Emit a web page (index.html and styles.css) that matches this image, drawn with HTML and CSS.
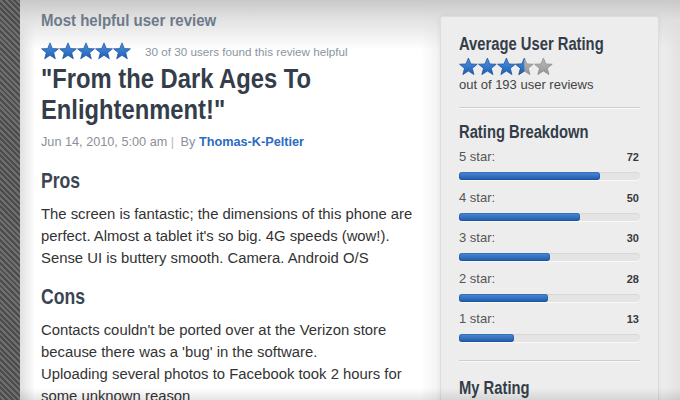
FILE: index.html
```html
<!DOCTYPE html>
<html lang="en">
<head>
    <meta charset="UTF-8">
    <title>Most helpful user review</title>
    <link rel="stylesheet" href="styles.css">
</head>
<body>
    <svg class="defs" width="0" height="0">
        <defs>
            <linearGradient id="blue" x1="0" y1="0" x2="0" y2="1">
                <stop offset="0" stop-color="#4f93e4"/>
                <stop offset="1" stop-color="#1d5fb3"/>
            </linearGradient>
            <linearGradient id="grey" x1="0" y1="0" x2="0" y2="1">
                <stop offset="0" stop-color="#bdbdbd"/>
                <stop offset="1" stop-color="#939393"/>
            </linearGradient>
            <clipPath id="half"><rect x="0" y="0" width="10" height="20"/></clipPath>
            <polygon id="star" points="10,1 12.6,7.3 19.4,7.6 14.1,11.9 15.9,18.6 10,14.8 4.1,18.6 5.9,11.9 0.6,7.6 7.4,7.3"/>
        </defs>
    </svg>

    <div class="stripe"></div>

    <div class="page">
        <div class="review">
            <h2 class="kicker">Most helpful user review</h2>

            <div class="helpful">
                <span class="stars">
                    <svg viewBox="0 0 20 20"><use href="#star" class="on"/></svg>
                    <svg viewBox="0 0 20 20"><use href="#star" class="on"/></svg>
                    <svg viewBox="0 0 20 20"><use href="#star" class="on"/></svg>
                    <svg viewBox="0 0 20 20"><use href="#star" class="on"/></svg>
                    <svg viewBox="0 0 20 20"><use href="#star" class="on"/></svg>
                </span>
                <span>30 of 30 users found this review helpful</span>
            </div>

            <h1 class="title">"From the Dark Ages To<br>Enlightenment!"</h1>

            <div class="meta">Jun 14, 2010, 5:00 am <span class="sep">|</span> By <a href="#">Thomas-K-Peltier</a></div>

            <h3>Pros</h3>
            <p>The screen is fantastic; the dimensions of this phone are perfect. Almost a tablet it's so big. 4G speeds (wow!). Sense UI is buttery smooth. Camera. Android O/S</p>

            <h3>Cons</h3>
            <p>Contacts couldn't be ported over at the Verizon store because there was a 'bug' in the software.<br>
            Uploading several photos to Facebook took 2 hours for some unknown reason</p>
        </div>

        <div class="sidebar">
            <div class="panel">
                <h4>Average User Rating</h4>
                <div class="stars big">
                    <svg viewBox="0 0 20 20"><use href="#star" class="on"/></svg>
                    <svg viewBox="0 0 20 20"><use href="#star" class="on"/></svg>
                    <svg viewBox="0 0 20 20"><use href="#star" class="on"/></svg>
                    <svg viewBox="0 0 20 20"><use href="#star" class="off"/><use href="#star" class="on" clip-path="url(#half)"/></svg>
                    <svg viewBox="0 0 20 20"><use href="#star" class="off"/></svg>
                </div>
                <div class="count">out of 193 user reviews</div>

                <hr>

                <h4>Rating Breakdown</h4>
                <div class="row">
                    <div class="row-head"><span>5 star:</span><b>72</b></div>
                    <div class="track"><div class="fill" style="width: 78%"></div></div>
                </div>
                <div class="row">
                    <div class="row-head"><span>4 star:</span><b>50</b></div>
                    <div class="track"><div class="fill" style="width: 67%"></div></div>
                </div>
                <div class="row">
                    <div class="row-head"><span>3 star:</span><b>30</b></div>
                    <div class="track"><div class="fill" style="width: 50%"></div></div>
                </div>
                <div class="row">
                    <div class="row-head"><span>2 star:</span><b>28</b></div>
                    <div class="track"><div class="fill" style="width: 49%"></div></div>
                </div>
                <div class="row">
                    <div class="row-head"><span>1 star:</span><b>13</b></div>
                    <div class="track"><div class="fill" style="width: 30.5%"></div></div>
                </div>

                <hr class="last">

                <h4>My Rating</h4>
            </div>
        </div>
    </div>
</body>
</html>
```

FILE: styles.css
```css
html, body {
    margin: 0;
    height: 400px;
    overflow: hidden;
}
body {
    display: flex;
    font-family: "Liberation Sans", Arial, sans-serif;
    color: #333;
}
.defs {
    position: absolute;
}
.stripe {
    width: 20px;
    flex: none;
    background: repeating-linear-gradient(45deg, #4c4c4c 0 2px, #6e6e6e 2px 4px);
}
.page {
    flex: 1;
    display: flex;
    position: relative;
    background:
        linear-gradient(#c9c9c9, rgba(222,222,222,0.85) 20px, rgba(255,255,255,0) 50px),
        linear-gradient(90deg, #fff 400px, #f3f3f3 418px, #f5f5f5 630px, #e2e2e2 660px);
}
/* soft fade along the bottom edge */
.page::after {
    content: "";
    position: absolute;
    left: 0;
    right: 0;
    bottom: 0;
    height: 12px;
    background: linear-gradient(rgba(0,0,0,0), rgba(0,0,0,0.1));
}
.review {
    width: 382px;
    flex: none;
    padding: 10px 0 0 21px;
    background:
        linear-gradient(#c9c9c9, rgba(222,222,222,0.85) 20px, rgba(255,255,255,0) 50px),
        linear-gradient(90deg, #e0e0e0, #f6f6f6 11px, #fff 15px);
}

/* headings imitate a bold condensed face */
.kicker, .title, h3, h4 {
    font-weight: bold;
    white-space: nowrap;
    transform-origin: left center;
}
.kicker {
    margin: 0;
    font-size: 16.5px;
    line-height: 20px;
    color: #6d7a8a;
    transform: scaleX(0.91);
}
.helpful {
    display: flex;
    align-items: center;
    gap: 14px;
    margin-top: 12px;
    font-size: 11.7px;
    color: #8b95a1;
}
.stars {
    display: flex;
}
.stars svg {
    width: 18px;
    height: 18px;
}
.stars.big svg {
    width: 18.8px;
    height: 19px;
}
.on {
    fill: url(#blue);
    stroke: #1a4f96;
    stroke-width: 0.8;
}
.off {
    fill: url(#grey);
    stroke: #8a8a8a;
    stroke-width: 0.8;
}
.title {
    margin: 4px 0 0;
    font-size: 27px;
    line-height: 31px;
    color: #343d49;
    transform: scaleX(0.88);
}
.meta {
    margin-top: 8px;
    font-size: 12.7px;
    line-height: 16px;
    color: #8a9099;
}
.meta .sep {
    color: #b8b8b8;
    margin-right: 3px;
}
.meta a {
    color: #2b6bc2;
    font-weight: bold;
    text-decoration: none;
}
h3 {
    margin: 18px 0 0;
    font-size: 22px;
    line-height: 26px;
    color: #3b4551;
    transform: scaleX(0.8);
}
h3 + p {
    margin-top: 9px;
}
p {
    margin: 0;
    font-size: 14.85px;
    line-height: 22px;
    color: #333;
}
p + h3 {
    margin-top: 15px;
}

.sidebar {
    padding: 16px 0 0 17px;
}
.panel {
    width: 181px;
    height: 400px;
    padding: 16px 18px 0;
    background: #ededed;
    border: 1px solid #dcdcdc;
    border-radius: 3px;
    box-shadow: 0 0 5px rgba(0,0,0,0.07);
}
h4 {
    margin: 0;
    font-size: 18px;
    line-height: 22px;
    color: #343d49;
    transform: scaleX(0.82);
}
.stars.big {
    margin-top: 1.5px;
}
.count {
    margin-top: 1.5px;
    font-size: 13px;
    line-height: 16px;
    color: #444;
}
hr {
    border: 0;
    border-top: 1px solid #cfcfcf;
    border-bottom: 1px solid #f9f9f9;
    margin: 14px 0 12px;
}
hr.last {
    margin: 18px 0 15px;
}
.row {
    margin-top: 8.5px;
}
h4 + .row {
    margin-top: 5px;
}
.row-head {
    display: flex;
    justify-content: space-between;
    align-items: baseline;
    height: 17px;
    font-size: 13px;
    line-height: 17px;
    color: #555;
}
.row-head b {
    font-size: 11px;
    color: #3a3a3a;
    margin-right: 1px;
}
.track {
    margin-top: 7px;
    height: 8px;
    border-radius: 4px;
    background: #e4e4e4;
    box-shadow: inset 0 1px 1px rgba(0,0,0,0.06), 0 1px 0 #f9f9f9;
}
.fill {
    height: 100%;
    border-radius: 3px;
    background: linear-gradient(#4c89d6, #1f5aa8);
    box-shadow: inset 0 0 0 1px rgba(20,70,140,0.35);
}
```
